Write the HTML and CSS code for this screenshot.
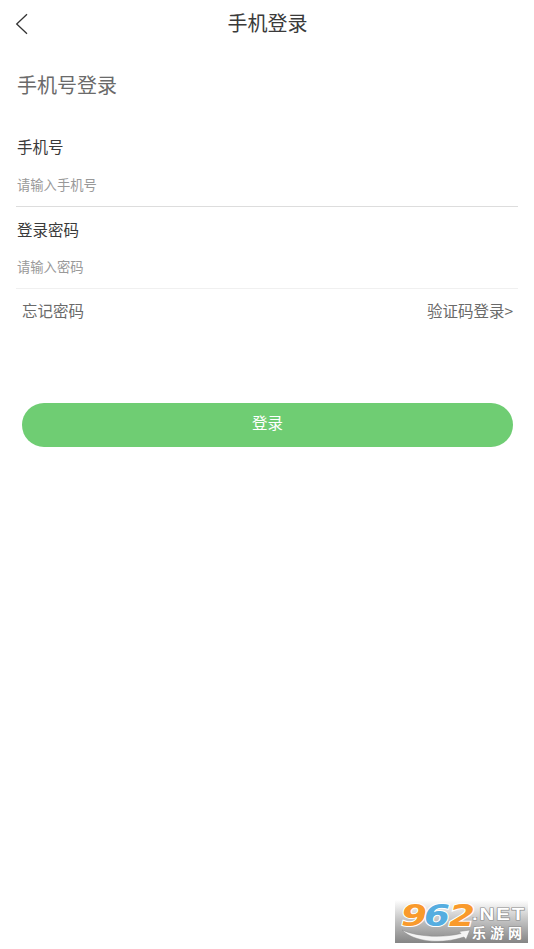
FILE: index.html
```html
<!DOCTYPE html>
<html lang="zh-CN">
<head>
<meta charset="utf-8">
<title>手机登录</title>
<link rel="stylesheet" href="styles.css">
</head>
<body>
<header class="header">
  <svg class="back" viewBox="0 0 14 22" width="14" height="22"><path d="M12 1.2 1.7 11 12 20.8"/></svg>
  <h1 class="title">手机登录</h1>
</header>
<main class="content">
  <h2 class="heading">手机号登录</h2>
  <div class="field">
    <div class="label">手机号</div>
    <div class="placeholder">请输入手机号</div>
  </div>
  <div class="field field-light">
    <div class="label">登录密码</div>
    <div class="placeholder">请输入密码</div>
  </div>
  <div class="links"><span>忘记密码</span><span>验证码登录&gt;</span></div>
  <div class="submit">登录</div>
</main>
<div class="watermark">
  <svg viewBox="0 0 133 43" width="133" height="43">
    <path class="swoosh" d="M7 30C22 37 48 38 66 33.5L64 31.5 75 30 71 39.5 69 37C48 44 20 43 7 30Z"/>
    <g class="digits">
      <text class="orange" x="6" y="26" textLength="26" lengthAdjust="spacingAndGlyphs">9</text>
      <text class="blue" x="29" y="26" textLength="26" lengthAdjust="spacingAndGlyphs">6</text>
      <text class="orange" x="54" y="26" textLength="26" lengthAdjust="spacingAndGlyphs">2</text>
    </g>
    <text class="net" x="77" y="20" textLength="54" lengthAdjust="spacingAndGlyphs">.NET</text>
    <text class="site" x="77" y="38" textLength="50">乐游网</text>
  </svg>
</div>
</body>
</html>
```
FILE: styles.css
```css
* { box-sizing: border-box; }
body {
  margin: 0;
  min-height: 949px;
  background: #fff;
  color: #3a3a3a;
  font-family: "Noto Sans CJK SC", sans-serif;
}
.header {
  display: grid;
  grid-template-columns: 40px 1fr 40px;
  align-items: center;
  height: 46px;
  padding-left: 1px;
}
.back {
  margin: 2px 0 0 14px;
  fill: none;
  stroke: #333;
  stroke-width: 1.3;
}
.title {
  margin: 0;
  font-size: 20px;
  font-weight: 400;
  line-height: 46px;
  text-align: center;
}
.content { padding: 24px 16px 0; }
.heading {
  margin: 0 0 30px 1px;
  color: #6a6a6a;
  font-size: 20px;
  font-weight: 400;
  line-height: 30px;
}
.field {
  height: 77px;
  margin-bottom: 6px;
  padding-left: 1px;
  border-bottom: 1px solid #ddd;
}
.field-light {
  height: 76px;
  border-color: #f0f0f0;
}
.label {
  font-size: 15.5px;
  line-height: 32px;
}
.placeholder {
  margin-top: 11px;
  color: #999;
  font-size: 13.3px;
  line-height: 24px;
}
.field-light .placeholder { margin-top: 10px; }
.links {
  display: flex;
  justify-content: space-between;
  padding: 0 5px 0 6px;
  color: #6a6a6a;
  font-size: 15.5px;
  line-height: 30px;
}
.submit {
  height: 44px;
  margin: 78px 5px 0 6px;
  border-radius: 22px;
  background: #6fcd73;
  color: #fff;
  font-size: 15.5px;
  line-height: 39px;
  text-align: center;
}
.watermark {
  position: absolute;
  right: 6px;
  bottom: 6px;
  width: 133px;
  height: 43px;
  background: linear-gradient(#fff, #c9c9c9 42%, #858585);
}
.watermark svg { display: block; }
.swoosh { fill: #f4f4f4; stroke: #888; stroke-width: .5; }
.digits {
  font: italic 700 31px "DejaVu Sans", sans-serif;
  stroke: #fff;
  stroke-width: 2px;
  paint-order: stroke;
}
.orange { fill: #f99a2c; }
.blue { fill: #55ade0; }
.net {
  fill: #fff;
  stroke: #888;
  stroke-width: 1.2px;
  paint-order: stroke;
  font: 700 17px "Liberation Sans", sans-serif;
  letter-spacing: 1.5px;
}
.site {
  fill: #fff;
  stroke: #888;
  stroke-width: 1px;
  paint-order: stroke;
  font: 700 14px "Noto Sans CJK SC", sans-serif;
}
```
